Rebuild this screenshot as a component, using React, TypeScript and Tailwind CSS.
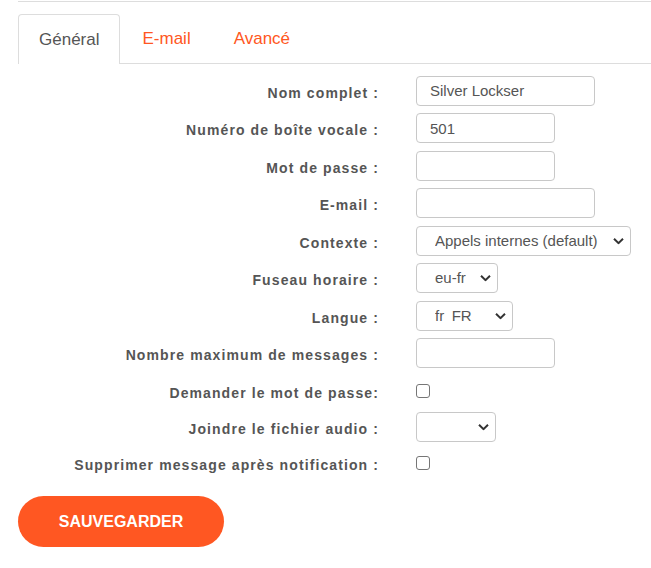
import React from "react";

function Chevron() {
  return (
    <svg
      className="pointer-events-none absolute right-[7px] top-1/2 -translate-y-1/2"
      width="11"
      height="7"
      viewBox="0 0 11 7"
      fill="none"
    >
      <path d="M1 1.2 L5.5 5.6 L10 1.2" stroke="#333" strokeWidth="2" />
    </svg>
  );
}

function TextInput({ w, value }: { w: string; value?: string }) {
  return (
    <input
      type="text"
      defaultValue={value}
      className={`${w} h-[30px] rounded-[4px] border border-[#c8c8c8] bg-white px-[13px] text-[15px] text-[#555] outline-none`}
    />
  );
}

function Select({ w, value }: { w: string; value: string }) {
  return (
    <div className={`relative ${w} h-[30px]`}>
      <select
        defaultValue={value}
        className="h-full w-full appearance-none rounded-[4px] border border-[#c8c8c8] bg-white pl-[18px] pr-[20px] text-[15px] text-[#555] outline-none"
      >
        <option value={value}>{value}</option>
      </select>
      <Chevron />
    </div>
  );
}

function Checkbox() {
  return (
    <span className="block h-[14px] w-[14px] rounded-[3px] border border-[#767676] bg-white" />
  );
}

function Row({
  label,
  h,
  children,
}: {
  label: string;
  h: string;
  children: React.ReactNode;
}) {
  return (
    <div className={`flex items-center ${h}`}>
      <div className="w-[361px] pt-[5px] text-right text-[14px] font-bold tracking-[1.1px] text-[#555]">
        {label}
      </div>
      <div className="ml-[37px] flex items-center">{children}</div>
    </div>
  );
}

export default function App() {
  return (
    <div className="h-[568px] w-[651px] bg-white font-['Liberation_Sans',Arial,sans-serif]">
      <div className="ml-[18px] mt-px h-px bg-[#ddd]" />
      <div className="ml-[18px] mt-[12px] flex h-[50px] border-b border-[#ddd]">
        <div className="relative -mb-px flex h-[50px] items-center rounded-t-[4px] border-x border-t border-[#ddd] bg-white px-[20px] text-[17px] text-[#555]">
          Général
        </div>
        <div className="flex h-[49px] items-center border border-transparent px-[21px] text-[17px] text-[#ff5722]">
          E-mail
        </div>
        <div className="flex h-[49px] items-center border border-transparent px-[20px] text-[17px] text-[#ff5722]">
          Avancé
        </div>
      </div>

      <div className="ml-[18px] pt-[8px]">
        <Row label="Nom complet :" h="h-[37.5px]">
          <TextInput w="w-[179px]" value="Silver Lockser" />
        </Row>
        <Row label="Numéro de boîte vocale :" h="h-[37.5px]">
          <TextInput w="w-[139px]" value="501" />
        </Row>
        <Row label="Mot de passe :" h="h-[37.5px]">
          <TextInput w="w-[139px]" />
        </Row>
        <Row label="E-mail :" h="h-[37.5px]">
          <TextInput w="w-[179px]" />
        </Row>
        <Row label="Contexte :" h="h-[37.5px]">
          <Select w="w-[215px]" value="Appels internes (default)" />
        </Row>
        <Row label="Fuseau horaire :" h="h-[37.5px]">
          <Select w="w-[82px]" value="eu-fr" />
        </Row>
        <Row label="Langue :" h="h-[37.5px]">
          <Select w="w-[97px]" value={"fr\u2002FR"} />
        </Row>
        <Row label="Nombre maximum de messages :" h="h-[37.5px]">
          <TextInput w="w-[139px]" />
        </Row>
        <Row label="Demander le mot de passe:" h="h-[37px]">
          <Checkbox />
        </Row>
        <Row label="Joindre le fichier audio :" h="h-[35px]">
          <Select w="w-[80px]" value="" />
        </Row>
        <Row label="Supprimer message après notification :" h="h-[37px]">
          <Checkbox />
        </Row>
      </div>

      <div className="ml-[18px] mt-[15px]">
        <button
          type="button"
          className="h-[51px] w-[206px] rounded-full bg-[#ff5722] text-[16px] font-bold text-white"
        >
          SAUVEGARDER
        </button>
      </div>
    </div>
  );
}
